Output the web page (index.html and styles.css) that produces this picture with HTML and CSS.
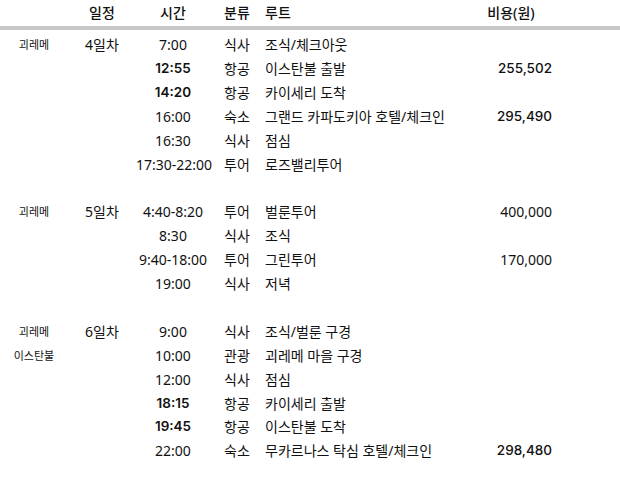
FILE: index.html
```html
<!DOCTYPE html>
<html lang="ko">
<head>
<meta charset="utf-8">
<link rel="stylesheet" href="styles.css">
</head>
<body>
<table class="plan">
  <colgroup>
    <col class="c-place"><col class="c-day"><col class="c-time"><col class="c-type"><col class="c-route"><col class="c-cost"><col class="c-rest">
  </colgroup>
  <thead>
    <tr><th></th><th class="ctr">일정</th><th class="ctr">시간</th><th class="lft">분류</th><th class="lft">루트</th><th class="ctr">비용(원)</th><th></th></tr>
  </thead>
  <tbody>
    <tr class="first"><td class="place">괴레메</td><td class="ctr">4일차</td><td class="ctr">7:00</td><td>식사</td><td>조식/체크아웃</td><td class="num"></td><td></td></tr>
    <tr><td></td><td></td><td class="ctr b">12:55</td><td>항공</td><td>이스탄불 출발</td><td class="num m">255,502</td><td></td></tr>
    <tr><td></td><td></td><td class="ctr b">14:20</td><td>항공</td><td>카이세리 도착</td><td class="num"></td><td></td></tr>
    <tr><td></td><td></td><td class="ctr">16:00</td><td>숙소</td><td>그랜드 카파도키아 호텔/체크인</td><td class="num m">295,490</td><td></td></tr>
    <tr><td></td><td></td><td class="ctr">16:30</td><td>식사</td><td>점심</td><td class="num"></td><td></td></tr>
    <tr><td></td><td></td><td class="ctr">17:30-22:00</td><td>투어</td><td>로즈밸리투어</td><td class="num"></td><td></td></tr>
    <tr><td></td><td></td><td></td><td></td><td></td><td></td><td></td></tr>
    <tr><td class="place">괴레메</td><td class="ctr">5일차</td><td class="ctr">4:40-8:20</td><td>투어</td><td>벌룬투어</td><td class="num">400,000</td><td></td></tr>
    <tr><td></td><td></td><td class="ctr">8:30</td><td>식사</td><td>조식</td><td class="num"></td><td></td></tr>
    <tr><td></td><td></td><td class="ctr">9:40-18:00</td><td>투어</td><td>그린투어</td><td class="num">170,000</td><td></td></tr>
    <tr><td></td><td></td><td class="ctr">19:00</td><td>식사</td><td>저녁</td><td class="num"></td><td></td></tr>
    <tr><td></td><td></td><td></td><td></td><td></td><td></td><td></td></tr>
    <tr><td class="place">괴레메</td><td class="ctr">6일차</td><td class="ctr">9:00</td><td>식사</td><td>조식/벌룬 구경</td><td class="num"></td><td></td></tr>
    <tr><td class="place">이스탄불</td><td></td><td class="ctr">10:00</td><td>관광</td><td>괴레메 마을 구경</td><td class="num"></td><td></td></tr>
    <tr><td></td><td></td><td class="ctr">12:00</td><td>식사</td><td>점심</td><td class="num"></td><td></td></tr>
    <tr><td></td><td></td><td class="ctr b">18:15</td><td>항공</td><td>카이세리 출발</td><td class="num"></td><td></td></tr>
    <tr><td></td><td></td><td class="ctr b">19:45</td><td>항공</td><td>이스탄불 도착</td><td class="num"></td><td></td></tr>
    <tr><td></td><td></td><td class="ctr">22:00</td><td>숙소</td><td>무카르나스 탁심 호텔/체크인</td><td class="num m">298,480</td><td></td></tr>
  </tbody>
</table>
</body>
</html>
```

FILE: styles.css
```css
html, body {
  margin: 0;
  padding: 0;
  background: #ffffff;
}
body {
  font-family: "Noto Sans", "Noto Sans CJK KR", sans-serif;
  font-size: 14px;
  color: #111111;
}
.plan {
  width: 620px;
  border-collapse: collapse;
  table-layout: fixed;
}
.c-place { width: 68px; }
.c-day { width: 68px; }
.c-time { width: 74px; }
.c-type { width: 47px; }
.c-route { width: 213px; }
.c-cost { width: 90px; }
.c-rest { width: 60px; }
.plan th {
  height: 26px;
  padding: 0;
  font-weight: 500;
  border-bottom: 4px solid #c8c8c8;
  line-height: 26px;
  white-space: nowrap;
}
.plan td {
  height: 23.9px;
  padding: 0;
  line-height: 23.9px;
  white-space: nowrap;
  text-align: left;
}
.plan th.lft, .plan td.lft { text-align: left; }
.plan td:nth-child(4), .plan th:nth-child(4) { padding-left: 14px; }
.plan td:nth-child(5), .plan th:nth-child(5) { padding-left: 8px; }
.plan .ctr { text-align: center; }
.plan th:nth-child(6) { padding-right: 8px; }
.plan td.num { text-align: right; padding-right: 8px; }
.plan tr.first td { padding-top: 3px; }
.plan td.place {
  text-align: center;
  font-size: 11px;
  font-family: "Noto Sans CJK KR", sans-serif;
}
.plan .b {
  font-family: "Inter", "Noto Sans", sans-serif;
  font-weight: 600;
  font-size: 13.5px;
}
.plan .m {
  font-family: "Inter", "Noto Sans", sans-serif;
  font-weight: 500;
  font-size: 13.5px;
}
```
